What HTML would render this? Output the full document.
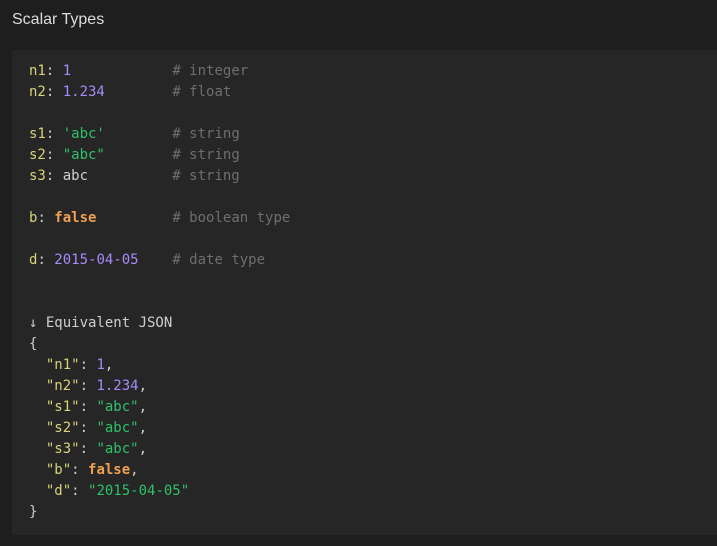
<!DOCTYPE html>
<html><head><style>
body{margin:0;background:#1e1e1e;width:717px;height:546px;overflow:hidden;font-family:"Liberation Sans",sans-serif}
h1{position:absolute;left:12px;top:11px;margin:0;font-size:16px;font-weight:normal;color:#dcdcdc}
pre{position:absolute;left:12px;top:50px;width:705px;height:485px;margin:0;box-sizing:border-box;padding:11px 17px;background:#262626;border-radius:3px 0 0 3px;font-family:"DejaVu Sans Mono","Liberation Mono",monospace;font-size:14px;line-height:21px;color:#cfcfcf}
.k{color:#d8d27a}.n{color:#a78bfa}.s{color:#2fc06a}.c{color:#6e6e6e}.b{color:#f0a050;font-weight:bold}
</style></head><body>
<h1>Scalar Types</h1>
<pre><span class="k">n1</span>: <span class="n">1</span>            <span class="c"># integer</span>
<span class="k">n2</span>: <span class="n">1.234</span>        <span class="c"># float</span>

<span class="k">s1</span>: <span class="s">'abc'</span>        <span class="c"># string</span>
<span class="k">s2</span>: <span class="s">"abc"</span>        <span class="c"># string</span>
<span class="k">s3</span>: abc          <span class="c"># string</span>

<span class="k">b</span>: <span class="b">false</span>         <span class="c"># boolean type</span>

<span class="k">d</span>: <span class="n">2015-04-05</span>    <span class="c"># date type</span>


↓ Equivalent JSON
{
  <span class="k">"n1"</span>: <span class="n">1</span>,
  <span class="k">"n2"</span>: <span class="n">1.234</span>,
  <span class="k">"s1"</span>: <span class="s">"abc"</span>,
  <span class="k">"s2"</span>: <span class="s">"abc"</span>,
  <span class="k">"s3"</span>: <span class="s">"abc"</span>,
  <span class="k">"b"</span>: <span class="b">false</span>,
  <span class="k">"d"</span>: <span class="s">"2015-04-05"</span>
}</pre>
</body></html>
